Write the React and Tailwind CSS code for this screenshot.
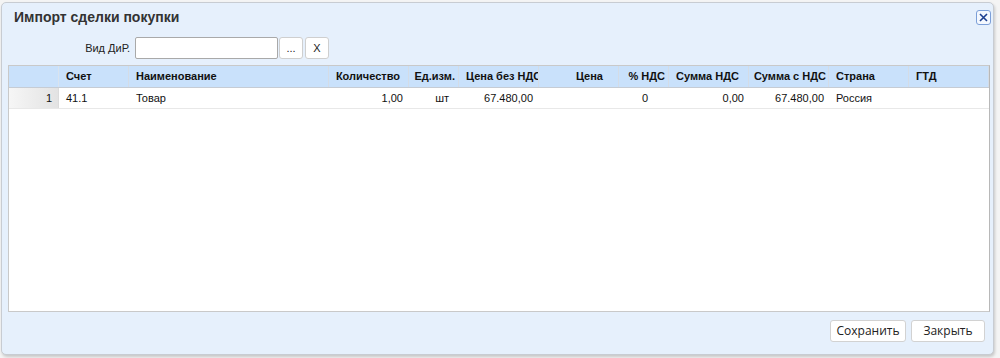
import React from "react";

const cols = [
  { t: "Счет", w: 70, h: "pl-[7px]", d: "pl-[7px]" },
  { t: "Наименование", w: 200, h: "pl-[7px]", d: "pl-[7px]" },
  { t: "Количество", w: 80, h: "justify-end pr-[8px]", d: "justify-end pr-[6px]" },
  { t: "Ед.изм.", w: 50, h: "justify-end pr-[3px]", d: "justify-end pr-[10px]" },
  { t: "Цена без НДС", w: 80, h: "pl-[7px]", d: "justify-end pr-[6px]" },
  { t: "Цена", w: 80, h: "justify-end pr-[15px]", d: "justify-end pr-[6px]" },
  { t: "% НДС", w: 50, h: "justify-end pr-[3px]", d: "justify-end pr-[21px]" },
  { t: "Сумма НДС", w: 80, h: "justify-end pr-[9px]", d: "justify-end pr-[5px]" },
  { t: "Сумма с НДС", w: 80, h: "justify-end pr-[2px]", d: "justify-end pr-[5px]" },
  { t: "Страна", w: 80, h: "pl-[7px]", d: "pl-[7px]" },
  { t: "ГТД", w: 80, h: "pl-[7px]", d: "pl-[7px]" },
];

const row = ["41.1", "Товар", "1,00", "шт", "67.480,00", "", "0", "0,00", "67.480,00", "Россия", ""];

export default function App() {
  return (
    <div className="w-[1000px] h-[358px] bg-[#f4f4f4] pt-[2px] pl-[1px]" style={{ fontFamily: "'Liberation Sans', Arial, sans-serif" }}>
      <div className="w-[993px] h-[353px] bg-[#e6f0fc] border border-[#c8ccd2] rounded-[5px] shadow-[1px_2px_3px_rgba(0,0,0,0.18)] flex flex-col">
        <div className="h-[30px] flex items-center justify-between pl-[12px] pr-[2px] pb-[2px]">
          <span className="text-[14px] font-bold text-[#333]">Импорт сделки покупки</span>
          <button className="w-[15px] h-[15px] border border-[#7c9fd8] rounded-[3px] bg-[#f4f8fe] flex items-center justify-center">
            <svg width="9" height="9" viewBox="0 0 9 9"><path d="M1 1L8 8M8 1L1 8" stroke="#1c3f8f" strokeWidth="1.6" /></svg>
          </button>
        </div>
        <div className="h-[32px] flex items-start pt-[4px]">
          <span className="w-[130px] h-[22px] flex items-center justify-end text-[11px] text-[#222] pr-[2px]">Вид ДиР.</span>
          <div className="ml-[3px] w-[143px] h-[22px] bg-white border border-[#a9a9a9] rounded-[2px]" />
          <button className="ml-[1px] w-[24px] h-[22px] bg-white border border-[#cfcfcf] rounded-[3px] text-[11px] text-[#222] leading-none">...</button>
          <button className="ml-[2px] w-[24px] h-[22px] bg-white border border-[#cfcfcf] rounded-[3px] text-[11px] text-[#222] leading-none">X</button>
        </div>
        <div className="ml-[6px] w-[982px] h-[247px] bg-white border border-[#c9c9c9] border-r-[#b8b8b8]">
          <div className="flex h-[22px] bg-[#c9e1fb] border-b border-[#c6ccd4]">
            <div className="w-[50px] border-r border-[#d9e3ee]" />
            {cols.map((c, i) => (
              <div key={i} style={{ width: c.w }} className={`shrink-0 border-r border-[#d4dce6] flex items-center overflow-hidden whitespace-nowrap text-[11px] font-bold text-[#111] ${c.h}`}>
                {c.t}
              </div>
            ))}
          </div>
          <div className="flex h-[21px] border-b border-[#e8e8e8]">
            <div className="w-[50px] border-r border-[#dcdcdc] bg-gradient-to-r from-[#f6f6f6] to-[#e3e3e3] flex items-center justify-end pr-[6px] text-[11px] text-[#111]">1</div>
            {cols.map((c, i) => (
              <div key={i} style={{ width: c.w }} className={`shrink-0 flex items-center overflow-hidden whitespace-nowrap text-[11px] text-[#111] ${c.d}`}>
                {row[i]}
              </div>
            ))}
          </div>
        </div>
        <div className="flex justify-end gap-[5px] pr-[8px] pt-[8px]">
          <button className="w-[76px] h-[22px] bg-white border border-[#d2d2d2] rounded-[3px] text-[12px] text-[#222]" style={{ fontFamily: "'Open Sans', sans-serif" }}>Сохранить</button>
          <button className="w-[74px] h-[22px] bg-white border border-[#d2d2d2] rounded-[3px] text-[12px] text-[#222]" style={{ fontFamily: "'Open Sans', sans-serif" }}>Закрыть</button>
        </div>
      </div>
    </div>
  );
}
